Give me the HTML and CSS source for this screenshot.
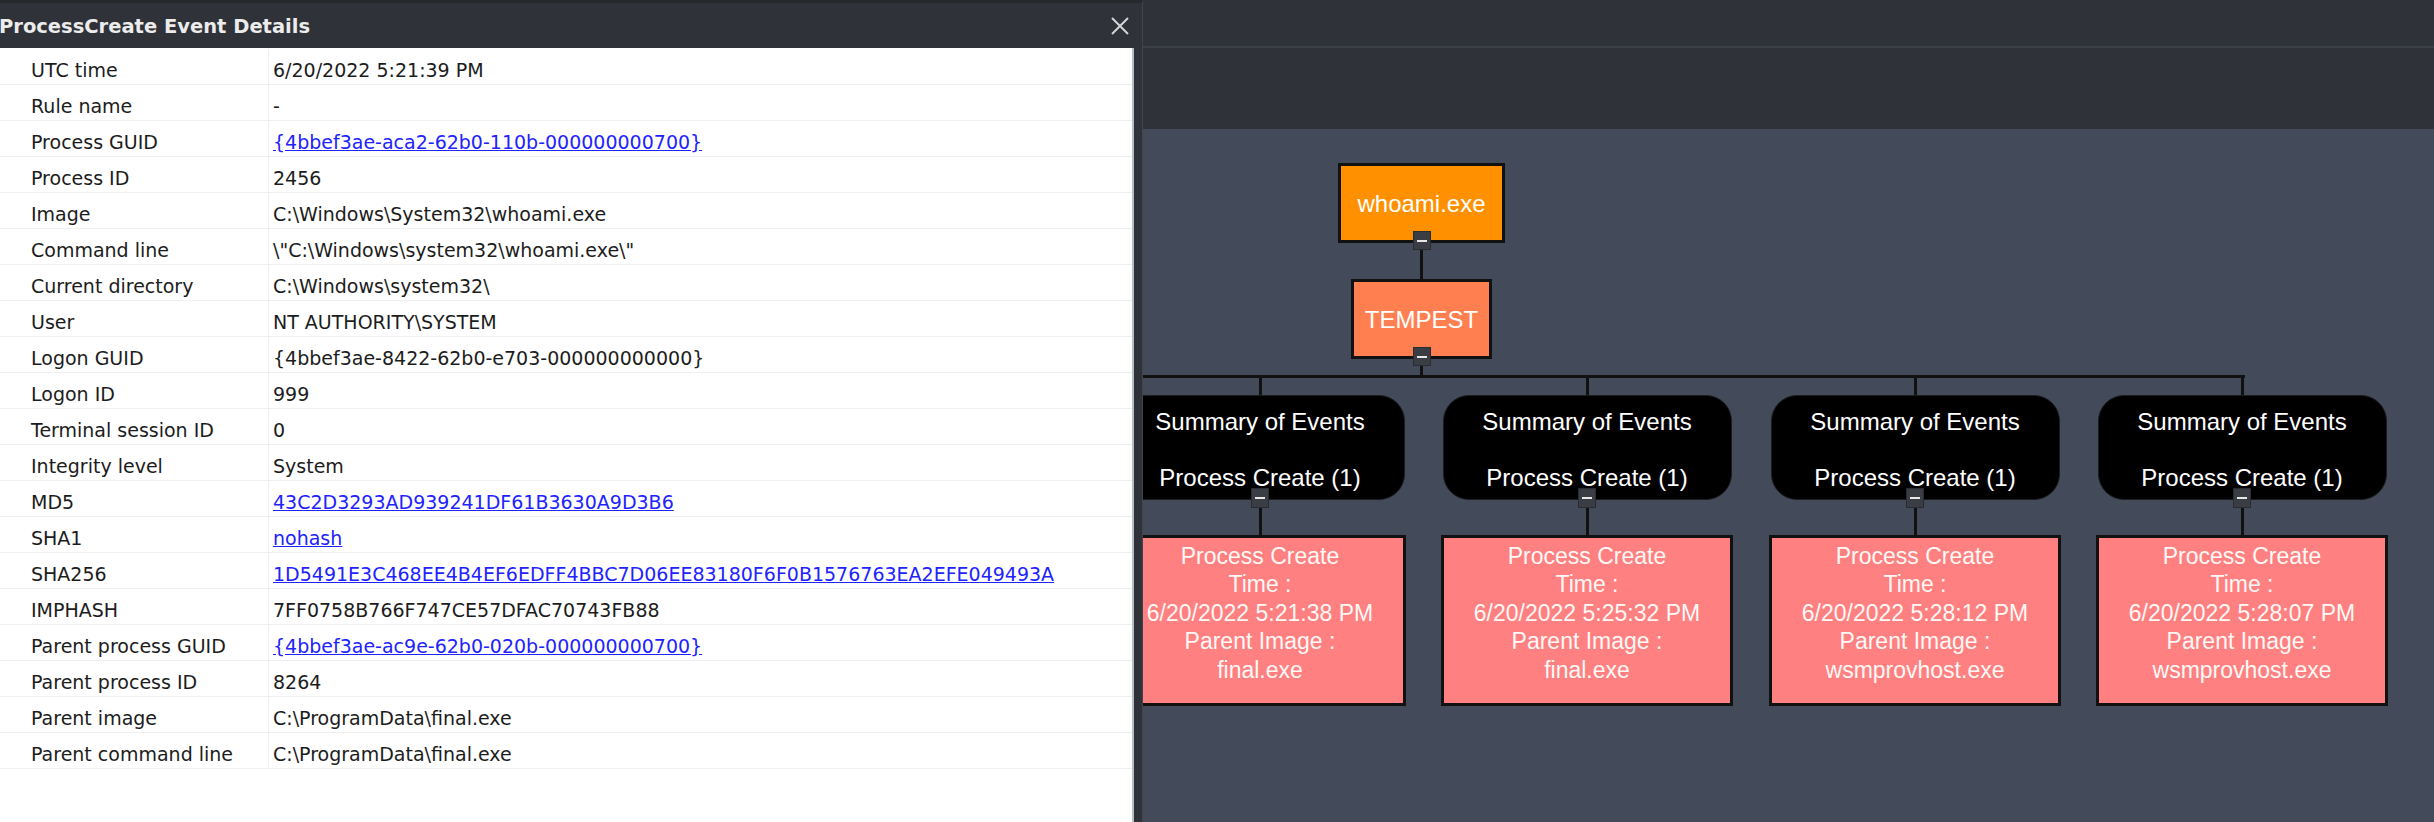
FILE: index.html
```html
<!DOCTYPE html>
<html>
<head>
<meta charset="utf-8">
<title>ProcessCreate Event Details</title>
<link rel="stylesheet" href="styles.css">
</head>
<body>
<div class="app">
  <div class="graph-window">
    <div class="topbar"></div>
    <div class="toolbar"></div>
    <div class="canvas">
      <div class="root-chain">
        <div class="node proc">whoami.exe<span class="btn"></span></div>
        <div class="stem s1"></div>
        <div class="node host">TEMPEST<span class="btn"></span></div>
        <div class="stem s2"></div>
      </div>
      <div class="hline"></div>

      <div class="col c1">
        <div class="stem drop"></div>
        <div class="summary"><div>Summary of Events</div><div>&nbsp;</div><div>Process Create (1)</div><span class="btn"></span></div>
        <div class="stem s3"></div>
        <div class="event"><div>Process Create</div><div>Time :</div><div>6/20/2022 5:21:38 PM</div><div>Parent Image :</div><div>final.exe</div></div>
      </div>
      <div class="col c2">
        <div class="stem drop"></div>
        <div class="summary"><div>Summary of Events</div><div>&nbsp;</div><div>Process Create (1)</div><span class="btn"></span></div>
        <div class="stem s3"></div>
        <div class="event"><div>Process Create</div><div>Time :</div><div>6/20/2022 5:25:32 PM</div><div>Parent Image :</div><div>final.exe</div></div>
      </div>
      <div class="col c3">
        <div class="stem drop"></div>
        <div class="summary"><div>Summary of Events</div><div>&nbsp;</div><div>Process Create (1)</div><span class="btn"></span></div>
        <div class="stem s3"></div>
        <div class="event"><div>Process Create</div><div>Time :</div><div>6/20/2022 5:28:12 PM</div><div>Parent Image :</div><div>wsmprovhost.exe</div></div>
      </div>
      <div class="col c4">
        <div class="stem drop"></div>
        <div class="summary"><div>Summary of Events</div><div>&nbsp;</div><div>Process Create (1)</div><span class="btn"></span></div>
        <div class="stem s3"></div>
        <div class="event"><div>Process Create</div><div>Time :</div><div>6/20/2022 5:28:07 PM</div><div>Parent Image :</div><div>wsmprovhost.exe</div></div>
      </div>
    </div>
  </div>

  <div class="panel">
    <div class="panel-head">
      <span class="title">ProcessCreate Event Details</span>
      <svg class="close" width="20" height="20" viewBox="0 0 20 20"><path d="M2 2 L18 18 M18 2 L2 18" stroke="#d4d4d4" stroke-width="2" fill="none"/></svg>
    </div>
    <div class="panel-body">
      <div class="row"><div class="k">UTC time</div><div class="v">6/20/2022 5:21:39 PM</div></div>
      <div class="row"><div class="k">Rule name</div><div class="v">-</div></div>
      <div class="row"><div class="k">Process GUID</div><div class="v"><a class="link">{4bbef3ae-aca2-62b0-110b-000000000700}</a></div></div>
      <div class="row"><div class="k">Process ID</div><div class="v">2456</div></div>
      <div class="row"><div class="k">Image</div><div class="v">C:\Windows\System32\whoami.exe</div></div>
      <div class="row"><div class="k">Command line</div><div class="v">\"C:\Windows\system32\whoami.exe\"</div></div>
      <div class="row"><div class="k">Current directory</div><div class="v">C:\Windows\system32\</div></div>
      <div class="row"><div class="k">User</div><div class="v">NT AUTHORITY\SYSTEM</div></div>
      <div class="row"><div class="k">Logon GUID</div><div class="v">{4bbef3ae-8422-62b0-e703-000000000000}</div></div>
      <div class="row"><div class="k">Logon ID</div><div class="v">999</div></div>
      <div class="row"><div class="k">Terminal session ID</div><div class="v">0</div></div>
      <div class="row"><div class="k">Integrity level</div><div class="v">System</div></div>
      <div class="row"><div class="k">MD5</div><div class="v"><a class="link">43C2D3293AD939241DF61B3630A9D3B6</a></div></div>
      <div class="row"><div class="k">SHA1</div><div class="v"><a class="link">nohash</a></div></div>
      <div class="row"><div class="k">SHA256</div><div class="v"><a class="link">1D5491E3C468EE4B4EF6EDFF4BBC7D06EE83180F6F0B1576763EA2EFE049493A</a></div></div>
      <div class="row"><div class="k">IMPHASH</div><div class="v">7FF0758B766F747CE57DFAC70743FB88</div></div>
      <div class="row"><div class="k">Parent process GUID</div><div class="v"><a class="link">{4bbef3ae-ac9e-62b0-020b-000000000700}</a></div></div>
      <div class="row"><div class="k">Parent process ID</div><div class="v">8264</div></div>
      <div class="row"><div class="k">Parent image</div><div class="v">C:\ProgramData\final.exe</div></div>
      <div class="row"><div class="k">Parent command line</div><div class="v">C:\ProgramData\final.exe</div></div>
    </div>
  </div>
</div>
</body>
</html>
```

FILE: styles.css
```css
* { box-sizing: border-box; }
html, body {
  margin: 0;
  padding: 0;
  width: 2434px;
  height: 822px;
  overflow: hidden;
  background: #2f3238;
  font-family: "Liberation Sans", Arial, sans-serif;
}
.app {
  position: relative;
  width: 2434px;
  height: 822px;
}

/* ---------- graph window ---------- */
.graph-window {
  display: flex;
  flex-direction: column;
  width: 100%;
  height: 100%;
}
.topbar {
  height: 48px;
  background: #2f3238;
  border-bottom: 2px solid #3c4049;
  flex: none;
}
.toolbar {
  height: 81px;
  background: #2f3238;
  flex: none;
}
.canvas {
  position: relative;
  flex: 1;
  background: #434a5a;
  overflow: hidden;
}

.stem {
  width: 3px;
  background: #111;
  flex: none;
}
.root-chain {
  position: absolute;
  left: 1338px;
  top: 34px;
  width: 167px;
  display: flex;
  flex-direction: column;
  align-items: center;
}
.node {
  position: relative;
  display: flex;
  align-items: center;
  justify-content: center;
  height: 80px;
  border: 3px solid #111;
  color: #fff;
  font-size: 24px;
  padding-top: 2px;
}
.proc { width: 167px; background: #ff9100; }
.host { width: 141px; background: #ff7f50; }
.s1 { height: 36px; }
.s2 { height: 16px; }

.btn {
  position: absolute;
  left: 50%;
  bottom: -10px;
  width: 18px;
  height: 19px;
  margin-left: -9px;
  background: #3a3d44;
  border: 1px solid #2a2c31;
  display: flex;
  align-items: center;
  justify-content: center;
}
.btn::before {
  content: "";
  width: 10px;
  height: 2px;
  background: #e8e8e8;
}

.hline {
  position: absolute;
  left: 0;
  top: 246px;
  width: 2245px;
  height: 3px;
  background: #111;
}

.col {
  position: absolute;
  top: 248px;
  width: 292px;
  display: flex;
  flex-direction: column;
  align-items: center;
  color: #fff;
}
.c1 { left: 1114px; }
.c2 { left: 1441px; }
.c3 { left: 1769px; }
.c4 { left: 2096px; }
.drop { height: 18px; }
.s3 { height: 35px; }

.summary {
  position: relative;
  width: 289px;
  height: 105px;
  background: #000;
  border: 1px solid #1a1c20;
  border-radius: 26px;
  padding-top: 12px;
  text-align: center;
  font-size: 24px;
  line-height: 28px;
  white-space: nowrap;
}
.summary .btn { bottom: -9px; height: 20px; }

.event {
  width: 292px;
  height: 171px;
  background: #ff8080;
  border: 3px solid #111;
  padding-top: 4px;
  text-align: center;
  font-size: 23px;
  line-height: 28.4px;
  color: #fff8f6;
  white-space: nowrap;
  overflow: hidden;
}

/* ---------- details panel ---------- */
.panel {
  position: absolute;
  left: 0;
  top: 0;
  width: 1143px;
  height: 822px;
  background: #2f3238;
  border-top: 3px solid #26282c;
  border-right: 1px solid #41454e;
  display: flex;
  flex-direction: column;
  font-family: "DejaVu Sans", Verdana, sans-serif;
}
.panel-head {
  height: 45px;
  flex: none;
  display: flex;
  align-items: center;
  justify-content: space-between;
  padding-right: 12px;
  padding-top: 1px;
}
.title {
  color: #ececec;
  font-weight: bold;
  font-size: 19.5px;
  margin-left: -1px;
}
.close { display: block; }
.panel-body {
  flex: 1;
  width: 1134px;
  background: #fff;
  padding-top: 1px;
  border-right: 2px solid #b8bcc4;
}
.row {
  display: flex;
  height: 36px;
  border-bottom: 1px solid #efefef;
  font-size: 19px;
  color: #1c1c1c;
}
.k {
  width: 269px;
  flex: none;
  padding-left: 31px;
  padding-top: 6px;
  border-right: 1px solid #efefef;
  display: flex;
  align-items: center;
  white-space: nowrap;
}
.v {
  flex: 1;
  padding-left: 4px;
  padding-top: 6px;
  display: flex;
  align-items: center;
  white-space: nowrap;
}
.link {
  color: #2222ff;
  text-decoration: underline;
}
```
